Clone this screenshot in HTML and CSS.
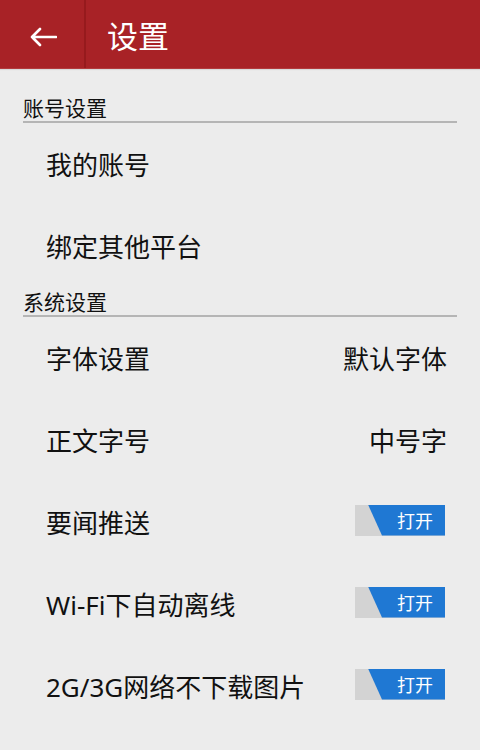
FILE: index.html
```html
<!DOCTYPE html>
<html lang="zh">
<head>
<meta charset="utf-8">
<link rel="stylesheet" href="styles.css">
</head>
<body>
<header class="appbar">
  <div class="back">
    <svg width="28" height="20" viewBox="0 0 28 20"><path d="M27 10H3M11 2L3 10L11 18" fill="none" stroke="#fff" stroke-width="2.6" stroke-linecap="round" stroke-linejoin="round"/></svg>
  </div>
  <h1 class="title">设置</h1>
</header>
<main class="content">
  <section class="group first">
    <div class="group-title">账号设置</div>
    <div class="row"><span class="label">我的账号</span></div>
    <div class="row"><span class="label">绑定其他平台</span></div>
  </section>
  <section class="group">
    <div class="group-title">系统设置</div>
    <div class="row"><span class="label">字体设置</span><span class="value">默认字体</span></div>
    <div class="row"><span class="label">正文字号</span><span class="value">中号字</span></div>
    <div class="row"><span class="label">要闻推送</span><span class="toggle"><span class="toggle-on">打开</span></span></div>
    <div class="row"><span class="label">Wi-Fi下自动离线</span><span class="toggle"><span class="toggle-on">打开</span></span></div>
    <div class="row"><span class="label">2G/3G网络不下载图片</span><span class="toggle"><span class="toggle-on">打开</span></span></div>
  </section>
</main>
</body>
</html>
```
FILE: styles.css
```css
* { box-sizing: border-box; }
html, body { margin: 0; padding: 0; }
body {
  width: 480px;
  height: 750px;
  overflow: hidden;
  background: #ececec;
  font-family: "Noto Sans", "Noto Sans CJK SC", sans-serif;
  color: #111;
}
.appbar {
  height: 69px;
  background: #a82226;
  display: flex;
  align-items: center;
  box-shadow: 0 1px 1px rgba(0,0,0,0.08);
  border-bottom: 1px solid #b23a3c;
}
.back {
  width: 86px;
  height: 100%;
  display: flex;
  align-items: center;
  padding: 5px 0 0 29px;
  border-right: 2px solid #961a1d;
}
.back svg { display: block; }
.title {
  margin: 0 0 0 21px;
  font-family: "Noto Sans CJK SC", sans-serif;
  font-weight: 400;
  font-size: 31px;
  color: #fff;
  line-height: 1;
}
.content { padding: 0 23px; }
.group-title {
  font-family: "Noto Sans CJK SC", sans-serif;
  font-size: 21px;
  line-height: 24px;
  height: 30px;
  padding-top: 2px;
  border-bottom: 2px solid #b5b5b5;
  color: #111;
}
.group.first .group-title { margin-top: 25px; height: 29px; padding-top: 1px; }
.row {
  height: 82px;
  display: flex;
  align-items: center;
  justify-content: space-between;
  padding: 2px 11px 0 23px;
}
.label, .value {
  font-size: 26px;
  line-height: 30px;
  color: #111;
}
.value { margin-right: -1px; }
.toggle {
  position: relative;
  width: 90px;
  height: 31px;
  background: #d3d3d3;
  margin-bottom: 6px;
  margin-right: 1px;
}
.toggle-on {
  position: absolute;
  inset: 0;
  background: #1f78d3;
  clip-path: polygon(13px 0, 100% 0, 100% 100%, 27px 100%);
  color: #fff;
  font-family: "Noto Sans CJK SC", sans-serif;
  font-size: 18px;
  line-height: 31px;
  text-align: right;
  padding-right: 12px;
}
```
